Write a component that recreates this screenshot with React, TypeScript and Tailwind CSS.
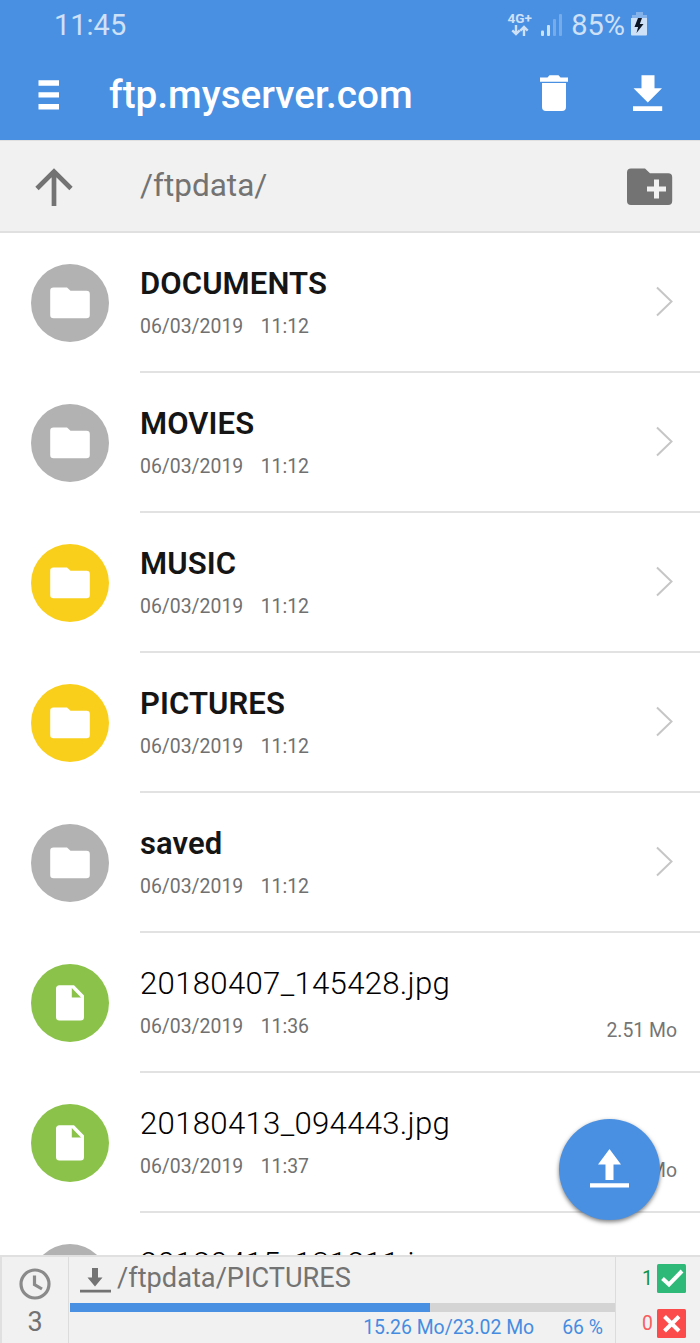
import clsx from "clsx";

type EntryKind = "folder" | "file";

interface Entry {
  name: string;
  date: string;
  time: string;
  kind: EntryKind;
  color: string;
  size?: string;
}

const GRAY = "bg-[#b2b2b2]";
const YELLOW = "bg-[#f9cf1c]";
const GREEN = "bg-[#8bc34a]";

const entries: Entry[] = [
  { name: "DOCUMENTS", date: "06/03/2019", time: "11:12", kind: "folder", color: GRAY },
  { name: "MOVIES", date: "06/03/2019", time: "11:12", kind: "folder", color: GRAY },
  { name: "MUSIC", date: "06/03/2019", time: "11:12", kind: "folder", color: YELLOW },
  { name: "PICTURES", date: "06/03/2019", time: "11:12", kind: "folder", color: YELLOW },
  { name: "saved", date: "06/03/2019", time: "11:12", kind: "folder", color: GRAY },
  { name: "20180407_145428.jpg", date: "06/03/2019", time: "11:36", kind: "file", color: GREEN, size: "2.51 Mo" },
  { name: "20180413_094443.jpg", date: "06/03/2019", time: "11:37", kind: "file", color: GREEN, size: "2.38 Mo" },
  { name: "20180415_131211.jpg", date: "06/03/2019", time: "11:37", kind: "file", color: GRAY, size: "3.12 Mo" },
];

function StatusBar() {
  return (
    <div className="flex h-[50px] items-center pl-[54px] pr-[52px] text-[#cfe1f7]">
      <span className="flex-1 text-[29px] leading-none">11:45</span>
      <div className="-mt-0.5 mr-[9px] flex w-[25px] flex-col items-center">
        <span className="text-[13.5px] font-bold leading-[13px]">4G+</span>
        <svg width="18" height="11" viewBox="0 0 18 11" fill="none" stroke="currentColor" strokeWidth="2.4">
          <path d="M5 0v9M1.3 5.400 5 9l3.700-3.600M13 11V2M9.300 5.600 13 2l3.700 3.600" />
        </svg>
      </div>
      <svg className="mr-[8px]" width="22" height="24" viewBox="0 0 22 24" fill="currentColor">
        <rect x="0" y="17.5" width="3" height="5.5" rx="1" />
        <rect x="6" y="12" width="3" height="11" rx="1" />
        <rect x="12" y="6" width="3" height="17" rx="1" opacity="0.35" />
        <rect x="18" y="1" width="3" height="22" rx="1" opacity="0.35" />
      </svg>
      <span className="mr-[6px] text-[29px] leading-none">85%</span>
      <svg className="-mt-0.5" width="17" height="24" viewBox="0 0 17 24">
        <path d="M5 0h7v3h4v4H1V3h4z" fill="#84b3eb" />
        <path d="M0 6h16v16.500a1 1 0 0 1-1 1H1a1 1 0 0 1-1-1z" fill="currentColor" />
        <path d="m7 6-3.500 9h3.600l-1.600 6 7-9H8.800L11 6z" fill="#0b1524" />
      </svg>
    </div>
  );
}

function TitleBar() {
  return (
    <div className="flex h-[90px] items-center pl-[38px] pr-[37px] text-white">
      <svg width="21" height="30" viewBox="0 0 21 30" fill="currentColor">
        <path d="M0.500 0.300h20.500v5.400H0.500zM0.500 12.200h20.500v5.200H0.500zM0.500 24h20.500v5.400H0.500z" />
      </svg>
      <h1 className="ml-[50px] flex-1 text-[38.7px] font-medium leading-none">ftp.myserver.com</h1>
      <svg className="-mt-1" width="28" height="36" viewBox="0 0 28 36" fill="currentColor">
        <path d="M0 2.500h7.500L9.500 0.300h9l2 2.200H28v4.300H0zM2 8h24V32a4 4 0 0 1-4 4H6a4 4 0 0 1-4-4z" />
      </svg>
      <svg className="-mt-1 ml-[65px]" width="30" height="36" viewBox="0 0 30 36" fill="currentColor">
        <path d="M8.500 0.300h13v13H29L14.800 27.500 0.500 13.300h8zM0 31.200H29.200V36H0z" />
      </svg>
    </div>
  );
}

function PathBar() {
  return (
    <div className="flex h-[93px] items-center border-b-2 border-t border-[#e0e0e0] bg-[#f1f1f1] pl-[35px] pr-[27px] text-[#737373]">
      <svg className="mt-0.5" width="38" height="38" viewBox="0 0 38 38" fill="none" stroke="currentColor" strokeWidth="4.7">
        <path d="M19 38V4M2 20.500 19 3.500l17 17" />
      </svg>
      <span className="-mt-px ml-[67px] flex-1 text-[31.5px] leading-none">/ftpdata/</span>
      <svg className="mt-0.5" width="46" height="38" viewBox="0 0 46 38" fill="currentColor">
        <path d="M4 .500H18L23 5.200H41.200a4 4 0 0 1 4 4V33a4 4 0 0 1-4 4H4a4 4 0 0 1-4-4V4.500a4 4 0 0 1 4-4z" />
        <path d="M20 18.500h7v-7h5v7h7v5h-7v7h-5v-7h-7z" fill="#f1f1f1" />
      </svg>
    </div>
  );
}

function KindIcon({ kind }: { kind: EntryKind }) {
  if (kind === "folder") {
    return (
      <svg width="40" height="32" viewBox="0 0 40 32" fill="white">
        <path d="M3.500 0.500H17l3.500 3.300H36.500a3.300 3.300 0 0 1 3.300 3.300V28a3.300 3.300 0 0 1-3.300 3.300h-33A3.300 3.300 0 0 1 .2 28V3.800A3.300 3.300 0 0 1 3.500.5z" />
      </svg>
    );
  }
  return (
    <svg width="28" height="36" viewBox="0 0 28 36" fill="white">
      <path
        fillRule="evenodd"
        d="M3.500 0.300H18L28 10.500V32a3.500 3.500 0 0 1-3.500 3.500h-21A3.500 3.500 0 0 1 0 32V3.800A3.500 3.500 0 0 1 3.500.3zM15.800 3v9.500H25z"
      />
    </svg>
  );
}

function EntryRow({ entry }: { entry: Entry }) {
  const isFolder = entry.kind === "folder";
  return (
    <li className="flex h-[140px] shrink-0 pl-[31px]">
      <div className={clsx("mt-[31.4px] flex size-[78px] items-center justify-center rounded-full", entry.color)}>
        <KindIcon kind={entry.kind} />
      </div>
      <div className="ml-[31px] flex flex-1 border-b-2 border-[#e2e2e2] pr-[23px]">
        <div className="flex-1 pt-[33px]">
          <p
            className={clsx(
              "leading-9",
              isFolder
                ? "text-[31px] font-semibold tracking-[0.1px] text-[#151515]"
                : "text-[31.2px] font-light tracking-[0.28px] text-black"
            )}
          >
            {entry.name}
          </p>
          <p className="mt-[13px] flex gap-[17.5px] text-[19.4px] leading-6 text-[#707070]">
            <span>{entry.date}</span>
            <span>{entry.time}</span>
          </p>
        </div>
        {isFolder ? (
          <svg className="mr-1 mt-[53px]" width="17" height="31" viewBox="0 0 17 31" fill="none" stroke="#c6c6c6" strokeWidth="2">
            <path d="m1 1.500 14.500 14L1 29.500" />
          </svg>
        ) : (
          <span className="mt-[86px] text-[19.4px] leading-6 text-[#757575]">{entry.size}</span>
        )}
      </div>
    </li>
  );
}

function UploadButton() {
  return (
    <button
      aria-label="Upload"
      className="absolute left-[559px] top-[1119px] flex size-[101px] items-center justify-center rounded-full bg-[#4990e2] pb-[3px] shadow-[0_2px_4px_rgba(0,0,0,0.5)]"
    >
      <svg width="39" height="39" viewBox="0 0 39 39" fill="white">
        <path d="M19.500 0 31 15.500h-7.500V31h-8V15.500H8zM0 34.300h39v4.300H0z" />
      </svg>
    </button>
  );
}

function ResultCount({ count, ok }: { count: number; ok: boolean }) {
  return (
    <div className="flex items-center justify-end gap-1">
      <span className={clsx("text-[19.4px] leading-none", ok ? "text-[#159244]" : "text-[#f95c5c]")}>{count}</span>
      <svg width="29" height="29" viewBox="0 0 29 29" fill="none" stroke="white" strokeWidth="4">
        <rect width="29" height="29" rx="1.500" fill={ok ? "#2fb978" : "#fb4b4b"} stroke="none" />
        <path d={ok ? "m5.500 14.500 6.500 6L25 7" : "m7.500 7.500 14.500 14.500M22 7.500 7.500 22"} />
      </svg>
    </div>
  );
}

function TransferBar() {
  const progress = 66;
  return (
    <footer className="flex h-[88px] shrink-0 border-l-2 border-t-2 border-[#e0e0e0] bg-[#f1f1f1] text-[#737373]">
      <div className="flex w-[67px] flex-col items-center border-r border-[#dcdcdc] pt-[11px]">
        <svg width="32" height="32" viewBox="0 0 32 32" fill="none" stroke="#8a8a8a" strokeWidth="3.200">
          <circle cx="16" cy="16" r="14" />
          <path d="M15.500 7.500v9l7.500 4.500" />
        </svg>
        <span className="mt-2 text-[27px] leading-7">3</span>
      </div>
      <div className="flex-1">
        <div className="flex h-[46px] items-start pl-[11px]">
          <svg className="mt-[11px]" width="31" height="25" viewBox="0 0 31 25" fill="currentColor">
            <path d="M12 0h6v9.500h4.500l-7.500 9-7.500-9h4.500zM0 21.800h31v2.700H0z" />
          </svg>
          <span className="ml-[6px] mt-[5px] text-[27.2px] leading-8">/ftpdata/PICTURES</span>
        </div>
        <div className="ml-px h-[9px] bg-[#d4d4d4]">
          <div className="h-full bg-[#4990e2]" style={{ width: `${progress}%` }} />
        </div>
        <div className="flex justify-end gap-7 pr-3 pt-[4px] text-[19.4px] leading-6 text-[#458ce1]">
          <span>15.26 Mo/23.02 Mo</span>
          <span>{progress} %</span>
        </div>
      </div>
      <div className="flex w-[85px] flex-col gap-4 border-l border-[#dcdcdc] pr-[14px] pt-[7px]">
        <ResultCount count={1} ok />
        <ResultCount count={0} ok={false} />
      </div>
    </footer>
  );
}

export default function App() {
  return (
    <div className="relative flex h-[1343px] w-[700px] flex-col overflow-hidden bg-white font-[Roboto,sans-serif]">
      <header className="bg-[#4990e2]">
        <StatusBar />
        <TitleBar />
      </header>
      <PathBar />
      <ul className="flex min-h-0 flex-1 flex-col overflow-hidden">
        {entries.map((entry) => (
          <EntryRow key={entry.name} entry={entry} />
        ))}
      </ul>
      <TransferBar />
      <UploadButton />
    </div>
  );
}
